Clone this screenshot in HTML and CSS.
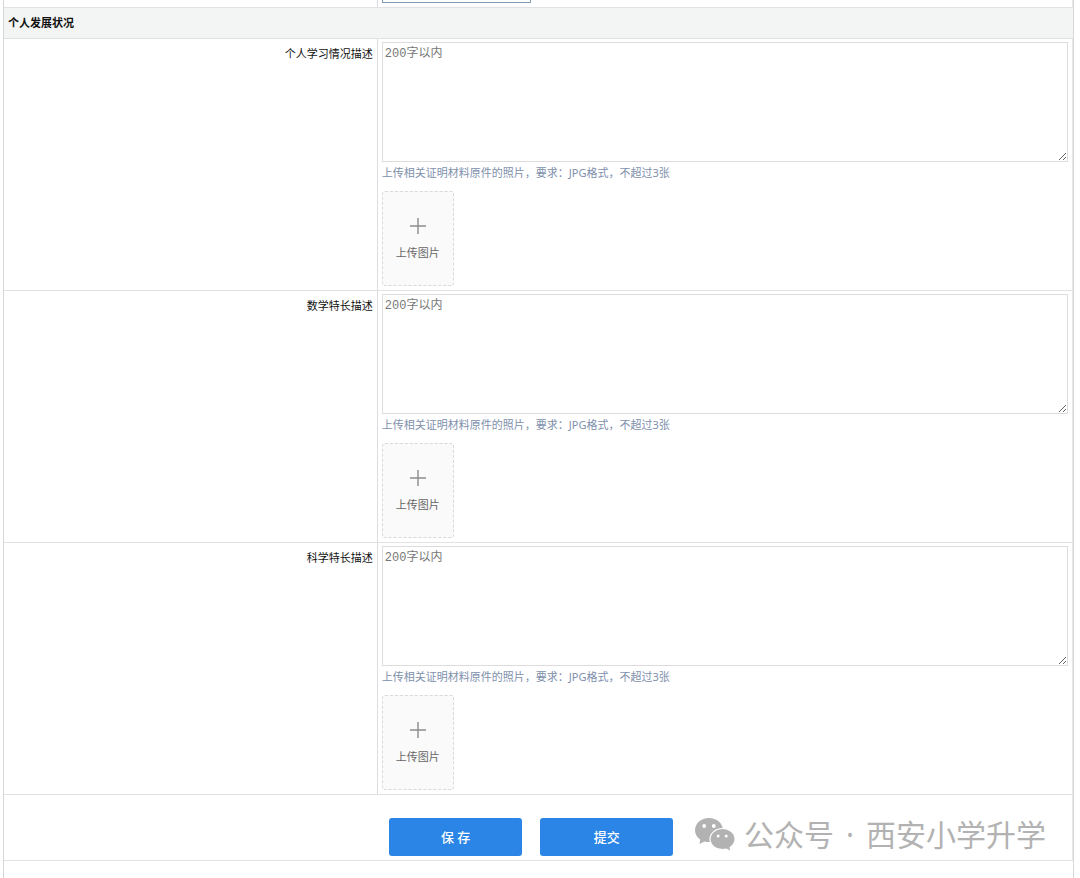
FILE: index.html
```html
<!DOCTYPE html>
<html lang="zh-CN">
<head>
  <meta charset="UTF-8">
  <title>个人发展状况</title>
  <link rel="stylesheet" href="styles.css">
</head>
<body>
  <form class="sheet">
    <div class="row row-last-field">
      <div class="cell-label"></div>
      <div class="cell-field"><input class="text-input" type="text" aria-label="文本"></div>
    </div>

    <h2 class="section-title">个人发展状况</h2>

    <div class="row">
      <div class="cell-label"><label for="study">个人学习情况描述</label></div>
      <div class="cell-field">
        <textarea id="study" placeholder="200字以内"></textarea>
        <p class="hint">上传相关证明材料原件的照片，要求：JPG格式，不超过3张</p>
        <button type="button" class="upload">
          <svg width="18" height="18" viewBox="0 0 18 18" stroke="#8c8c8c" stroke-width="1.4"><path d="M9 1v16M1 9h16"/></svg>
          <span>上传图片</span>
        </button>
      </div>
    </div>

    <div class="row">
      <div class="cell-label"><label for="math">数学特长描述</label></div>
      <div class="cell-field">
        <textarea id="math" placeholder="200字以内"></textarea>
        <p class="hint">上传相关证明材料原件的照片，要求：JPG格式，不超过3张</p>
        <button type="button" class="upload">
          <svg width="18" height="18" viewBox="0 0 18 18" stroke="#8c8c8c" stroke-width="1.4"><path d="M9 1v16M1 9h16"/></svg>
          <span>上传图片</span>
        </button>
      </div>
    </div>

    <div class="row">
      <div class="cell-label"><label for="science">科学特长描述</label></div>
      <div class="cell-field">
        <textarea id="science" placeholder="200字以内"></textarea>
        <p class="hint">上传相关证明材料原件的照片，要求：JPG格式，不超过3张</p>
        <button type="button" class="upload">
          <svg width="18" height="18" viewBox="0 0 18 18" stroke="#8c8c8c" stroke-width="1.4"><path d="M9 1v16M1 9h16"/></svg>
          <span>上传图片</span>
        </button>
      </div>
    </div>

    <div class="actions">
      <button type="button" class="btn">保 存</button>
      <button type="submit" class="btn">提交</button>
      <div class="watermark">
        <svg width="42" height="36" viewBox="0 0 42 36">
          <path fill="#b2b2b2" d="M15 1C7.300 1 1 6.400 1 13.200c0 3.900 2 7.100 5.200 9.300L5.500 27l5-2.600c1.400.4 2.900.6 4.500.6 7.700 0 14-5.300 14-11.900S22.700 1 15 1z"/>
          <path fill="#b2b2b2" stroke="#fff" stroke-width="1.200" d="M28.500 11.500C21.600 11.500 16 16.200 16 22.100s5.600 10.600 12.500 10.600c1.400 0 2.700-.2 4-.5l4.500 2.500-.9-4.100c3.100-2 5-5 5-8.500 0-5.900-5.700-10.600-12.600-10.600z"/>
          <g fill="#fff">
            <circle cx="10.200" cy="9" r="1.900"/>
            <circle cx="19.800" cy="9" r="1.900"/>
            <circle cx="24.200" cy="19" r="1.500"/>
            <circle cx="32.200" cy="19" r="1.500"/>
          </g>
        </svg>
        <div class="watermark-text">
          <span>公众号</span>
          <span>·</span>
          <span>西安小学升学</span>
        </div>
      </div>
    </div>
  </form>
</body>
</html>
```

FILE: styles.css
```css
* {
  box-sizing: border-box;
}
body {
  margin: 0 6px 0 3px;
  font-family: "Noto Sans", "Noto Sans CJK SC", sans-serif;
  font-size: 11px;
  line-height: 22px;
  color: #111;
  background: #fff;
}
.sheet {
  min-height: 100vh;
  border-left: 1px solid #d8d8d8;
  border-right: 1px solid #d8d8d8;
}
.row {
  display: grid;
  grid-template-columns: 35% 1fr;
  border-bottom: 1px solid #e2e2e2;
  border-right: 1px solid #e8e8e8;
}
.cell-label {
  padding: 4px 4px 3px;
  border-right: 1px solid #dcdde2;
  text-align: right;
}
.cell-field {
  padding: 3px 4px 4px;
}

/* tail of the previous group */
.row-last-field {
  height: 8px;
  overflow: hidden;
}
.row-last-field .cell-field {
  display: flex;
  align-items: flex-end;
  height: 7px;
}
.text-input {
  flex: none;
  width: 149px;
  height: 24px;
  border: 1px solid #7f9db9;
}

.section-title {
  margin: 0;
  padding: 4px;
  font-size: 11px;
  font-weight: 700;
  background: #f3f5f5;
  border-bottom: 1px solid #dfe1e1;
}

textarea {
  display: block;
  width: 100%;
  height: 120px;
  padding: 3px 2px;
  border: 1px solid #dcdcdc;
  background: #fff;
  font-family: "Liberation Mono", "Noto Sans CJK SC", monospace;
  font-size: 12px;
  line-height: 16px;
  resize: vertical;
}
textarea::placeholder {
  color: #777;
}
.hint {
  margin: 0 0 7px;
  color: #8090ac;
}
.upload {
  display: flex;
  flex-direction: column;
  align-items: center;
  justify-content: center;
  gap: 8px;
  width: 72px;
  height: 95px;
  padding: 2px 0 0;
  border: 1px dashed #d9d9d9;
  border-radius: 3px;
  background: #fafafa;
  color: #666;
  font-family: inherit;
  font-size: 11px;
  line-height: 20px;
  cursor: pointer;
}

.actions {
  position: relative;
  display: flex;
  gap: 18px;
  padding: 23px 4px 4px calc(35% + 11px);
  border-bottom: 1px solid #e2e2e2;
  border-right: 1px solid #e8e8e8;
}
.btn {
  width: 133px;
  height: 38px;
  padding: 0 0 2px;
  border: none;
  border-radius: 3px;
  background: #2b85e6;
  color: #fff;
  font-family: inherit;
  font-size: 13px;
  font-weight: 500;
  cursor: pointer;
}
.btn:hover {
  background: #1f74d1;
}
.watermark {
  position: absolute;
  right: 26px;
  bottom: 6px;
  display: flex;
  align-items: center;
  gap: 8px;
  color: #b2b2b2;
  font-size: 30px;
  line-height: 38px;
  white-space: nowrap;
  pointer-events: none;
}
.watermark-text {
  display: flex;
  gap: 12px;
}
```
